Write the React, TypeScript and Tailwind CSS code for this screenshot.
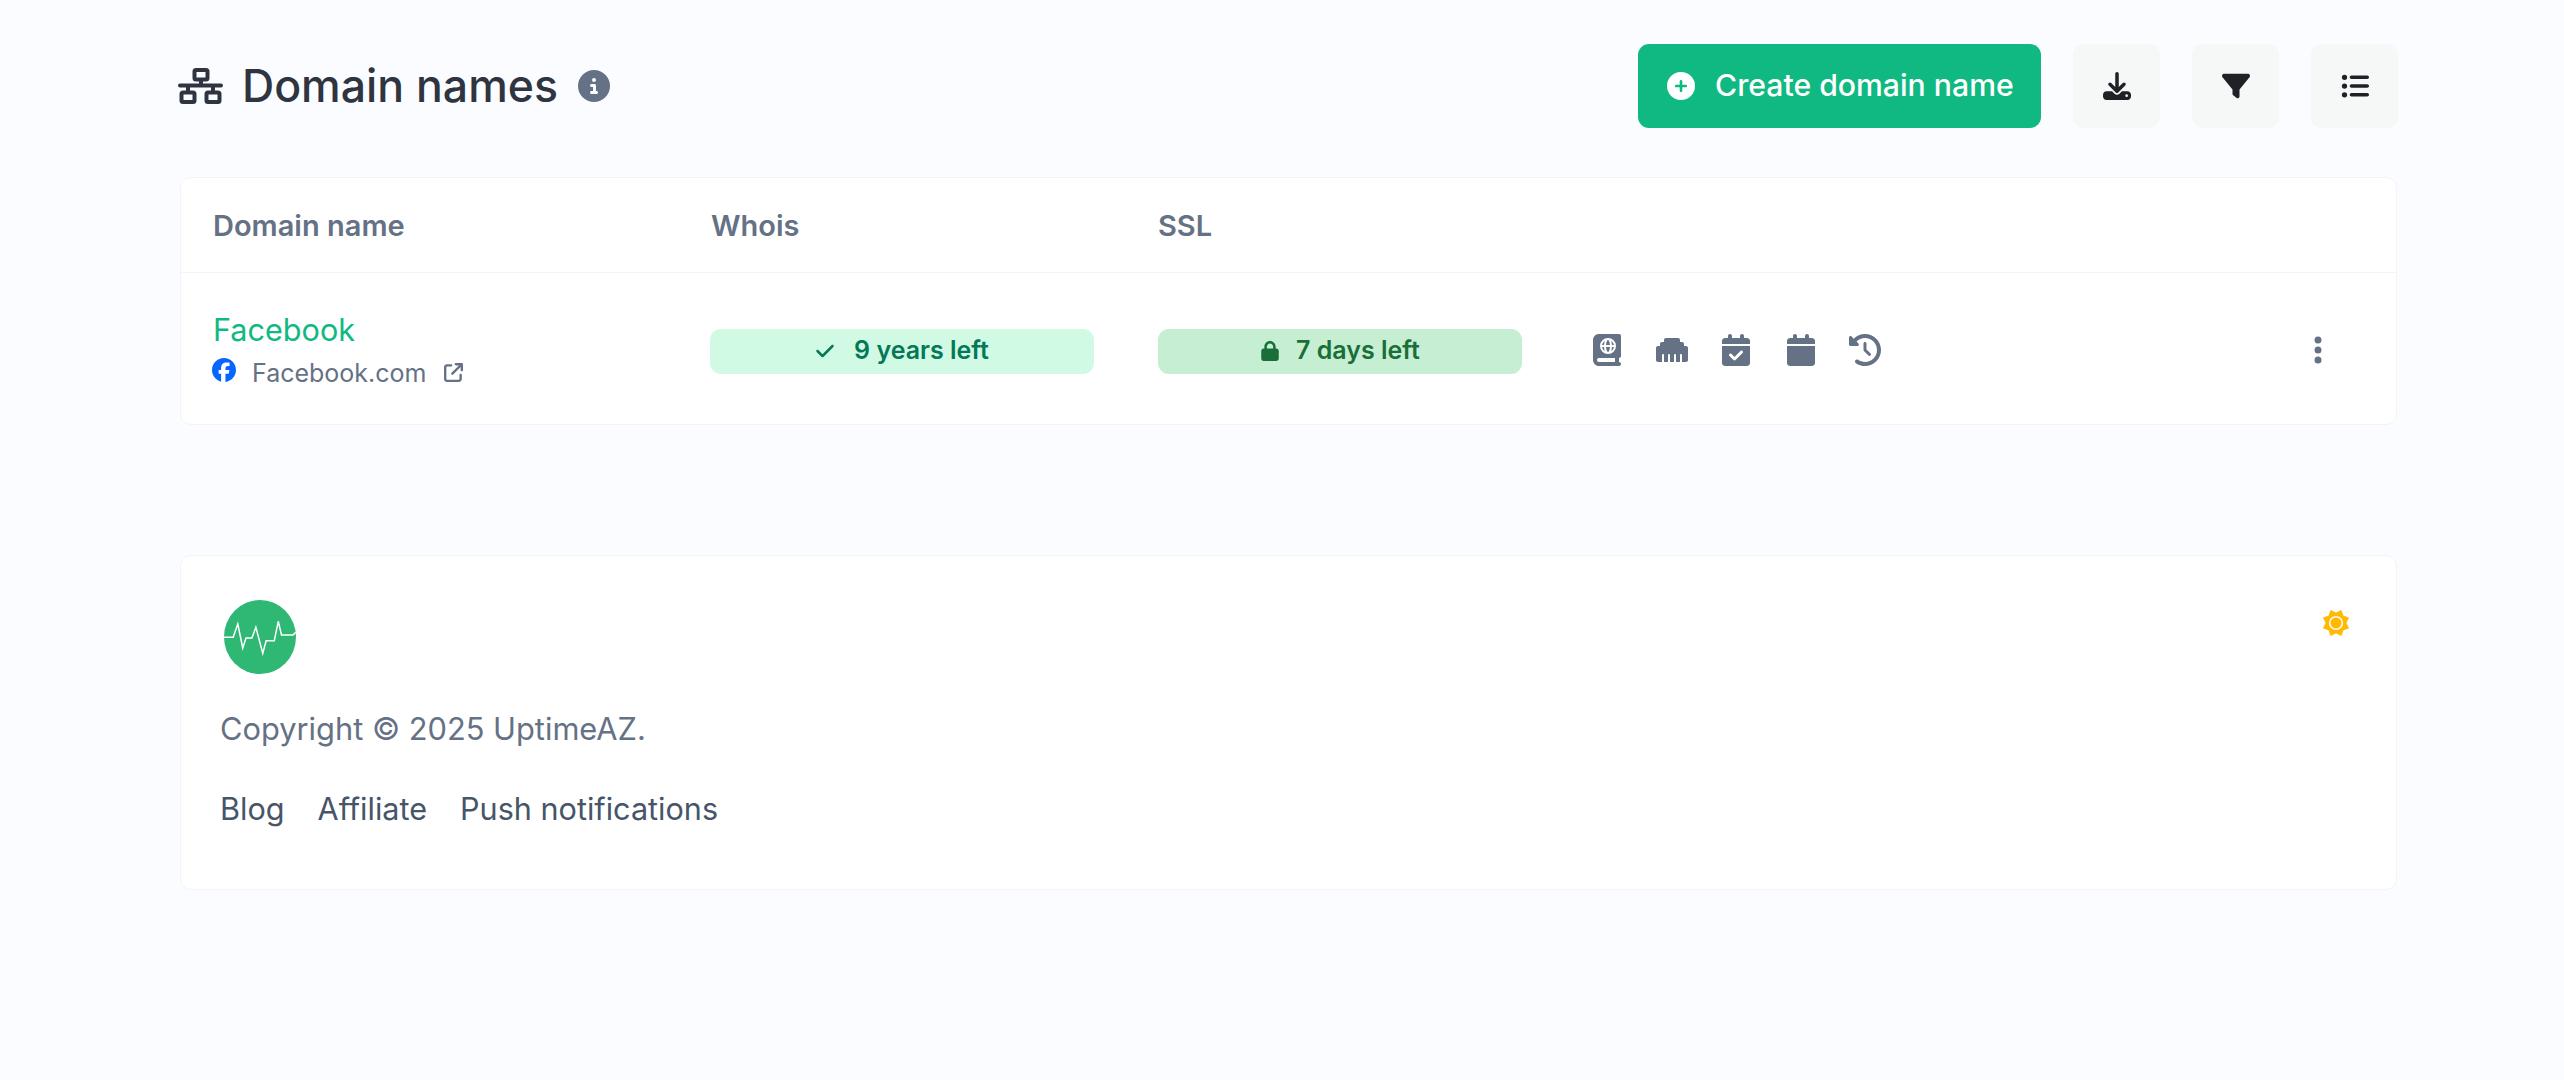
import React from "react";
import {
  FaArrowUpRightFromSquare,
  FaBookAtlas,
  FaCalendar,
  FaCalendarCheck,
  FaCheck,
  FaCircleInfo,
  FaCirclePlus,
  FaClockRotateLeft,
  FaDownload,
  FaEllipsisVertical,
  FaEthernet,
  FaFacebook,
  FaFilter,
  FaListUl,
  FaLock,
} from "react-icons/fa6";

function NetworkIcon() {
  return (
    <svg width="45" height="36" viewBox="0 0 45 36" fill="none" stroke="#2e3440" strokeWidth="4" strokeLinecap="round" strokeLinejoin="round" className="shrink-0">
      <rect x="16.5" y="2" width="13" height="9.5" rx="1.5" />
      <path d="M23 12v5M2 17.5h41M10 18v6M35 18v6" />
      <rect x="3.5" y="24.5" width="13" height="9.5" rx="1.5" />
      <rect x="28.5" y="24.5" width="13" height="9.5" rx="1.5" />
    </svg>
  );
}

function SunIcon() {
  const pts: string[] = [];
  for (let i = 0; i < 16; i++) {
    const a = ((i * 22.5 - 67.5) * Math.PI) / 180;
    const r = i % 2 === 0 ? 13.6 : 10;
    pts.push(`${14 + r * Math.cos(a)},${14 + r * Math.sin(a)}`);
  }
  return (
    <svg width="28" height="28" viewBox="0 0 28 28">
      <polygon points={pts.join(" ")} fill="#ffb900" stroke="#ffb900" strokeWidth="0.8" strokeLinejoin="round" />
      <circle cx="14" cy="14" r="6.300" fill="#ffb900" stroke="#fff" strokeWidth="1.500" />
    </svg>
  );
}

function Logo() {
  return (
    <svg width="72" height="74" viewBox="0 0 73 74" preserveAspectRatio="none" className="block">
      <ellipse cx="36.500" cy="37" rx="36.500" ry="37" fill="#2fb873" />
      <path
        d="M0 37.300H9.300L14 24l5 24 3.300-10h6l4-10.700 7 26 3.400-12.600H51L55 21.300 58.300 35H70l2.700-2.700"
        fill="none"
        stroke="#fff"
        strokeWidth="1.500"
      />
    </svg>
  );
}

function IconButton({ children }: { children: React.ReactNode }) {
  return <button className="flex h-[84px] w-[87px] items-center justify-center rounded-[11px] bg-[#f6f7f7] text-[#1e2126]">{children}</button>;
}

export default function App() {
  return (
    <div className="min-h-[1080px] bg-[#fbfcff] pl-[180px] pr-[167px] pt-[44px] font-['Inter',sans-serif]">
      <header className="mb-[49px] flex h-[84px] items-center justify-between">
        <div className="flex items-center">
          <span className="ml-[-2px] mr-[19px]"><NetworkIcon /></span>
          <h1 className="text-[44.600px] font-medium leading-none text-[#2e3440]">Domain names</h1>
          <FaCircleInfo className="ml-[20px] text-[#657184]" size={32} />
        </div>
        <div className="mr-[-1px] flex items-center gap-[32px]">
          <button className="flex h-[84px] w-[403px] items-center rounded-[11px] bg-[#10b981] pl-[29px] text-[30.200px] font-medium text-white">
            <FaCirclePlus size={28} className="mr-[20px] text-white" />
            Create domain name
          </button>
          <IconButton><FaDownload size={28} /></IconButton>
          <IconButton><FaFilter size={28} /></IconButton>
          <IconButton><FaListUl size={28} /></IconButton>
        </div>
      </header>

      <section className="rounded-[11px] border border-[#f3f4f6] bg-white">
        <div className="grid h-[95px] grid-cols-[498px_447px_1fr] items-center border-b border-[#f3f4f6] pl-[32px] pt-[2px] text-[29px] font-semibold text-[#657184]">
          <div>Domain name</div>
          <div>Whois</div>
          <div>SSL</div>
        </div>
        <div className="grid h-[151px] grid-cols-[497px_448px_433px_1fr] items-center pl-[32px]">
          <div className="pt-[2px]">
            <a className="block text-[30.600px] leading-[40px] text-[#10b981]">Facebook</a>
            <div className="mt-[7px] flex items-center text-[25px] leading-[32px] text-[#657184]">
              <FaFacebook size={24} className="ml-[-1px] mb-[7px] mr-[16px] text-[#0866ff]" />
              <span>Facebook.com</span>
              <FaArrowUpRightFromSquare size={19} className="mb-[2px] ml-[18px]" />
            </div>
          </div>
          <div className="mt-[5px]">
            <div className="flex h-[45px] w-[384px] items-center justify-center gap-[19px] rounded-[11px] bg-[#d1fae5] text-[25px] font-semibold text-[#047857]">
              <FaCheck size={20} />
              <span>9 years left</span>
            </div>
          </div>
          <div className="mt-[5px]">
            <div className="flex h-[45px] w-[364px] items-center justify-center gap-[16px] rounded-[11px] bg-[#c6eed3] text-[25px] font-semibold text-[#1a6e38]">
              <FaLock size={20} />
              <span>7 days left</span>
            </div>
          </div>
          <div className="mt-[2px] flex items-center justify-between pr-[62px] text-[#657184]">
            <div className="flex items-center gap-[32.500px]">
              <FaBookAtlas size={32} />
              <FaEthernet size={32} />
              <FaCalendarCheck size={32} />
              <FaCalendar size={32} />
              <FaClockRotateLeft size={32} />
            </div>
            <FaEllipsisVertical size={32} />
          </div>
        </div>
      </section>

      <footer className="mt-[130px] flex h-[335px] justify-between rounded-[11px] border border-[#f3f4f6] bg-white pl-[39px] pr-[46px] pt-[44px]">
        <div>
          <div className="ml-[4px]"><Logo /></div>
          <p className="mt-[34px] text-[30.800px] leading-[42px] text-[#657184]">Copyright © 2025 UptimeAZ.</p>
          <nav className="mt-[38px] flex gap-[33px] text-[30.600px] leading-[42px] text-[#475569]">
            <a>Blog</a>
            <a>Affiliate</a>
            <a>Push notifications</a>
          </nav>
        </div>
        <div className="pt-[9px]"><SunIcon /></div>
      </footer>
    </div>
  );
}
